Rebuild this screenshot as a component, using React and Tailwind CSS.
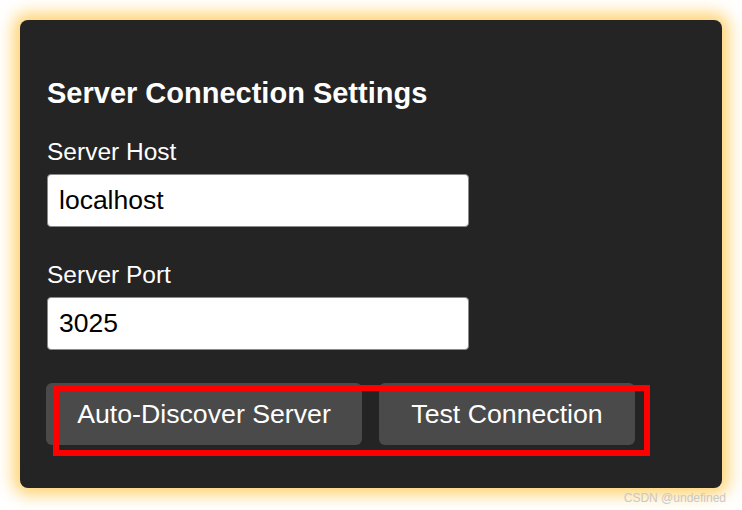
import React from 'react';

const App = () => {
  return (
    <div
      className="relative w-[742px] h-[510px] bg-white p-[20px] overflow-hidden"
      style={{ fontFamily: '"Liberation Sans", Arial, sans-serif' }}
    >
      {/* Card */}
      <div className="w-[702px] h-[468px] rounded-[8px] bg-[#242424] shadow-[0_0_16px_7px_rgba(255,200,80,0.8)] pt-[56px] pl-[27px]">
        <h2 className="text-[29px] leading-[34px] font-bold text-white">Server Connection Settings</h2>

        <div className="mt-[28px]">
          <label className="block text-[24.5px] leading-[28px] text-white">Server Host</label>
          <input
            className="mt-[8px] block w-[422px] h-[53px] rounded-[4px] border border-[#8a8a8a] bg-white px-[11px] text-[26.5px] text-black outline-none"
            defaultValue="localhost"
            style={{ fontFamily: '"Liberation Sans", Arial, sans-serif' }}
          />
        </div>

        <div className="mt-[34px]">
          <label className="block text-[24.5px] leading-[28px] text-white">Server Port</label>
          <input
            className="mt-[8px] block w-[422px] h-[53px] rounded-[4px] border border-[#8a8a8a] bg-white px-[11px] text-[26.5px] text-black outline-none"
            defaultValue="3025"
            style={{ fontFamily: '"Liberation Sans", Arial, sans-serif' }}
          />
        </div>

        <div className="mt-[33px] flex gap-[17px] -ml-[1px]">
          <button className="w-[316px] h-[62px] rounded-[6px] bg-[#4a4a4a] text-[26.7px] text-white">
            Auto-Discover Server
          </button>
          <button className="w-[256px] h-[62px] rounded-[6px] bg-[#4a4a4a] text-[26.7px] text-white">
            Test Connection
          </button>
        </div>
      </div>

      {/* Red annotation box */}
      <div className="absolute left-[53px] top-[385px] w-[597px] h-[71px] border-[6px] border-[#ff0000]" />

      {/* Watermark */}
      <div className="absolute right-[16px] top-[489px] text-[12px] text-[#c8c8c8]">CSDN @undefined</div>
    </div>
  );
};

export default App;
